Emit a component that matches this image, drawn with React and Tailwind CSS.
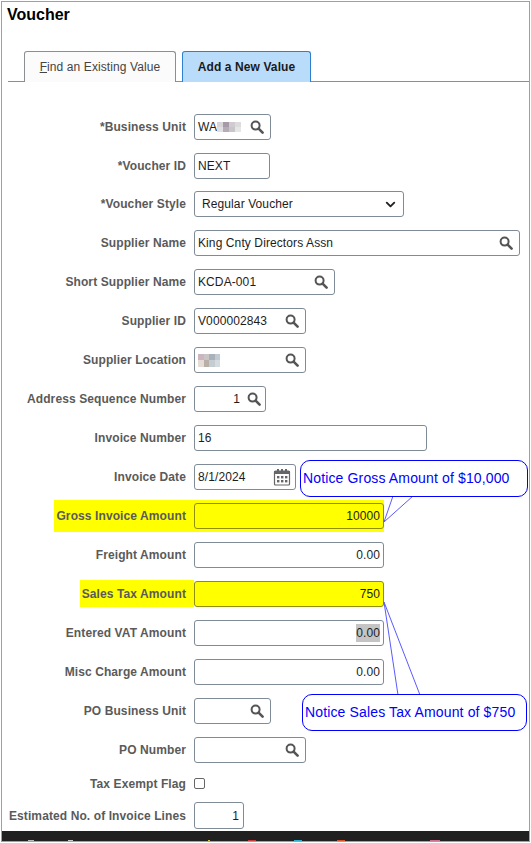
import React from "react";
import { ChevronDown } from "lucide-react";

// magnifier used in every prompt field
const SearchIcon = () => (
  <svg width="14" height="14" viewBox="0 0 14 14" className="shrink-0">
    <circle cx="5.6" cy="5.6" r="4" fill="none" stroke="#555" strokeWidth="2" />
    <path d="M8.6 8.6 L12.6 12.6" stroke="#555" strokeWidth="2.6" strokeLinecap="round" />
  </svg>
);

const CalendarIcon = () => (
  <svg width="18" height="18" viewBox="0 0 18 18" className="shrink-0">
    <rect x="1.5" y="3" width="15" height="14" rx="1" fill="#fff" stroke="#666" strokeWidth="1.2" />
    <rect x="1" y="3" width="16" height="3" fill="#666" />
    <rect x="4" y="1" width="2" height="3.5" fill="#666" />
    <rect x="8" y="1" width="2" height="3.5" fill="#666" />
    <rect x="12" y="1" width="2" height="3.5" fill="#666" />
    {[4, 8, 12].map((x) =>
      [8, 12].map((y) => <rect key={`${x}-${y}`} x={x} y={y} width="2.4" height="2.4" fill="#666" />)
    )}
  </svg>
);

// redacted values show as a blurred patch in the picture
const Blur = ({ colors, cols, cell, h }) => (
  <div className="grid" style={{ gridTemplateColumns: `repeat(${cols}, ${cell}px)` }}>
    {colors.map((c, i) => (
      <div key={i} style={{ background: c, height: h }} />
    ))}
  </div>
);

const Field = ({ w, children, right, icon, yellow }) => (
  <div
    className={`flex h-[26px] shrink-0 items-center rounded-[3px] border px-[3px] text-[12px] tracking-[0.1px] text-[#1c1c1c] ${
      yellow ? "border-[#8f8f00] bg-[#ffff00]" : "border-[#7f8b96] bg-white"
    } ${right ? "justify-end" : "justify-between"}`}
    style={{ width: w }}
  >
    {children}
    {icon}
  </div>
);

const Label = ({ children }) => (
  <div className="flex w-[194px] shrink-0 justify-end">
    <span className="flex items-center pr-2 text-[12px] font-bold tracking-[0.1px] text-[#5a5a5a]">
      {children}
    </span>
  </div>
);

const Row = ({ label, children }) => (
  <div className="flex h-[26px] items-center">
    <Label>{label}</Label>
    {children}
  </div>
);

const Prompt = ({ w, children }) => (
  <Field w={w} icon={<span className="mr-[3px] flex"><SearchIcon /></span>}>
    <span>{children}</span>
  </Field>
);

const Amount = ({ value, yellow }) => (
  <Field w={190} right yellow={yellow}>
    <span>{value}</span>
  </Field>
);

export default function App() {
  return (
    <div className="relative h-[843px] w-[531px] overflow-hidden bg-white font-['Liberation_Sans',Arial,sans-serif]">
      <div className="ml-px mt-px flex h-[841px] w-[529px] flex-col border border-[#7fa8cc]">
        <h1 className="ml-[5px] mt-[3px] text-[16px] font-bold leading-5 text-black">Voucher</h1>

        {/* tabs */}
        <div className="ml-[6px] mt-[26px] flex h-[31px] gap-[6px] border-b border-[#8a8f94] pl-4">
          <div className="flex h-[31px] w-[152px] items-center justify-center rounded-t-[3px] border border-b-0 border-[#8a8f94] bg-[#fbfbfb] text-[12px] tracking-[0.1px] text-[#444]">
            <span><span className="underline">F</span>ind an Existing Value</span>
          </div>
          <div className="flex h-[31px] w-[129px] items-center justify-center rounded-t-[3px] border border-b-0 border-[#2f7fd1] bg-[#b9dcfb] text-[12px] font-bold tracking-[0.1px] text-[#1a1a1a]">
            Add a New Value
          </div>
        </div>

        {/* form */}
        <div className="-ml-[2px] mt-[31.6px] flex flex-col gap-[12.95px]">
          <Row label="*Business Unit">
            <Field w={77} icon={<span className="mr-[3px] flex"><SearchIcon /></span>}>
              <span className="flex items-center">
                WA
                <Blur cols={4} cell={6} h={5} colors={["#d9d4da", "#a79aa8", "#cfcbd0", "#dcdcdc", "#e2dfe2", "#b5acb5", "#c9c6ca", "#e6e6e6"]} />
              </span>
            </Field>
          </Row>
          <Row label="*Voucher ID">
            <Field w={76}><span>NEXT</span></Field>
          </Row>
          <Row label="*Voucher Style">
            <Field w={210} icon={<ChevronDown size={15} strokeWidth={3} className="mr-[2px] text-[#222]" />}>
              <span className="pl-[4px]">Regular Voucher</span>
            </Field>
          </Row>
          <Row label="Supplier Name">
            <Prompt w={326}>King Cnty Directors Assn</Prompt>
          </Row>
          <Row label="Short Supplier Name">
            <Prompt w={141}>KCDA-001</Prompt>
          </Row>
          <Row label="Supplier ID">
            <Prompt w={112}>V000002843</Prompt>
          </Row>
          <Row label="Supplier Location">
            <Field w={112} icon={<span className="mr-[3px] flex"><SearchIcon /></span>}>
              <Blur cols={4} cell={5.5} h={6.5} colors={["#cdb5bf", "#c9c4c6", "#a9b2bb", "#c2cad1", "#e6dcd6", "#b8afa8", "#c5cdd3", "#d5dbe0"]} />
            </Field>
          </Row>
          <Row label="Address Sequence Number">
            <div className="flex h-[26px] w-[72px] items-center justify-end rounded-[3px] border border-[#7f8b96] bg-white pr-[4px] text-[12px] text-[#1c1c1c]">
              <span className="mr-[7px]">1</span>
              <SearchIcon />
            </div>
          </Row>
          <Row label="Invoice Number">
            <Field w={233}><span>16</span></Field>
          </Row>
          <Row label="Invoice Date">
            <Field w={102} icon={<span className="mr-[1px] flex"><CalendarIcon /></span>}>
              <span>8/1/2024</span>
            </Field>
          </Row>
          <div className="flex h-[26px] items-center">
            <div className="flex w-[194px] shrink-0 justify-end">
              <span className="flex h-[32px] w-[140px] items-center justify-end bg-[#ffff00] pr-2 text-[12px] font-bold tracking-[0.1px] text-[#5a5a5a]">
                Gross Invoice Amount
              </span>
            </div>
            <div className="flex h-[32px] items-center bg-[#ffff00]">
              <Amount value="10000" yellow />
            </div>
          </div>
          <Row label="Freight Amount">
            <Amount value="0.00" />
          </Row>
          <div className="flex h-[26px] items-center">
            <div className="flex w-[194px] shrink-0 justify-end">
              <span className="flex h-[27px] w-[114px] items-center justify-end bg-[#ffff00] pr-2 text-[12px] font-bold tracking-[0.1px] text-[#5a5a5a]">
                Sales Tax Amount
              </span>
            </div>
            <Amount value="750" yellow />
          </div>
          <Row label="Entered VAT Amount">
            <Field w={190} right>
              <span className="bg-[#c4c4c4]">0.00</span>
            </Field>
          </Row>
          <Row label="Misc Charge Amount">
            <Amount value="0.00" />
          </Row>
          <Row label="PO Business Unit">
            <Prompt w={77} />
          </Row>
          <Row label="PO Number">
            <Prompt w={112} />
          </Row>
          <div className="-my-[3px] flex h-[22px] items-center">
            <Label>Tax Exempt Flag</Label>
            <div className="h-[11px] w-[11px] rounded-[2px] border border-[#666] bg-white" />
          </div>
          <div className="-mt-[2px] flex h-[27px] items-center">
            <Label>Estimated No. of Invoice Lines</Label>
            <div className="flex h-[27px] w-[50px] items-center justify-end rounded-[3px] border border-[#7f8b96] bg-white pr-[4px] text-[12px] text-[#1c1c1c]">
              1
            </div>
          </div>
        </div>
      </div>

      {/* taskbar sliver cropped at the bottom */}
      <div className="absolute left-[2px] top-[831px] h-[10px] w-[527px] bg-[#202020]">
        <div className="absolute bottom-0 left-[26px] h-[1px] w-[6px] bg-[#bbb]" />
        <div className="absolute bottom-0 left-[66px] h-[1px] w-[5px] bg-[#ccc]" />
        <div className="absolute bottom-0 left-[206px] h-[1px] w-[2px] bg-[#e0c040]" />
        <div className="absolute bottom-0 left-[246px] h-[1px] w-[8px] bg-[#c83a3a]" />
        <div className="absolute bottom-0 left-[292px] h-[1px] w-[8px] bg-[#30b0d0]" />
        <div className="absolute bottom-0 left-[335px] h-[1px] w-[8px] bg-[#d8502a]" />
        <div className="absolute bottom-0 left-[428px] h-[1px] w-[10px] bg-[#d07090]" />
      </div>

      {/* annotation callouts */}
      <svg width="531" height="843" className="pointer-events-none absolute left-0 top-0">
        <path d="M393 496 L384 522 L413 496" fill="#fff" stroke="#5a5aff" strokeWidth="1" />
        <path d="M398 695 L384 602 L420 695" fill="none" stroke="#5a5aff" strokeWidth="1" />
      </svg>
      <div className="absolute left-[300px] top-[460px] flex h-[37px] w-[228px] items-center rounded-[10px] border-[1.5px] border-[#0000ff] bg-white pl-[2px] text-[14px] tracking-[0.14px] text-[#0000ff]">
        Notice Gross Amount of $10,000
      </div>
      <div className="absolute left-[302px] top-[694px] flex h-[37px] w-[225px] items-center rounded-[10px] border-[1.5px] border-[#0000ff] bg-white pl-[2px] text-[14px] tracking-[0.14px] text-[#0000ff]">
        Notice Sales Tax Amount of $750
      </div>
    </div>
  );
}
